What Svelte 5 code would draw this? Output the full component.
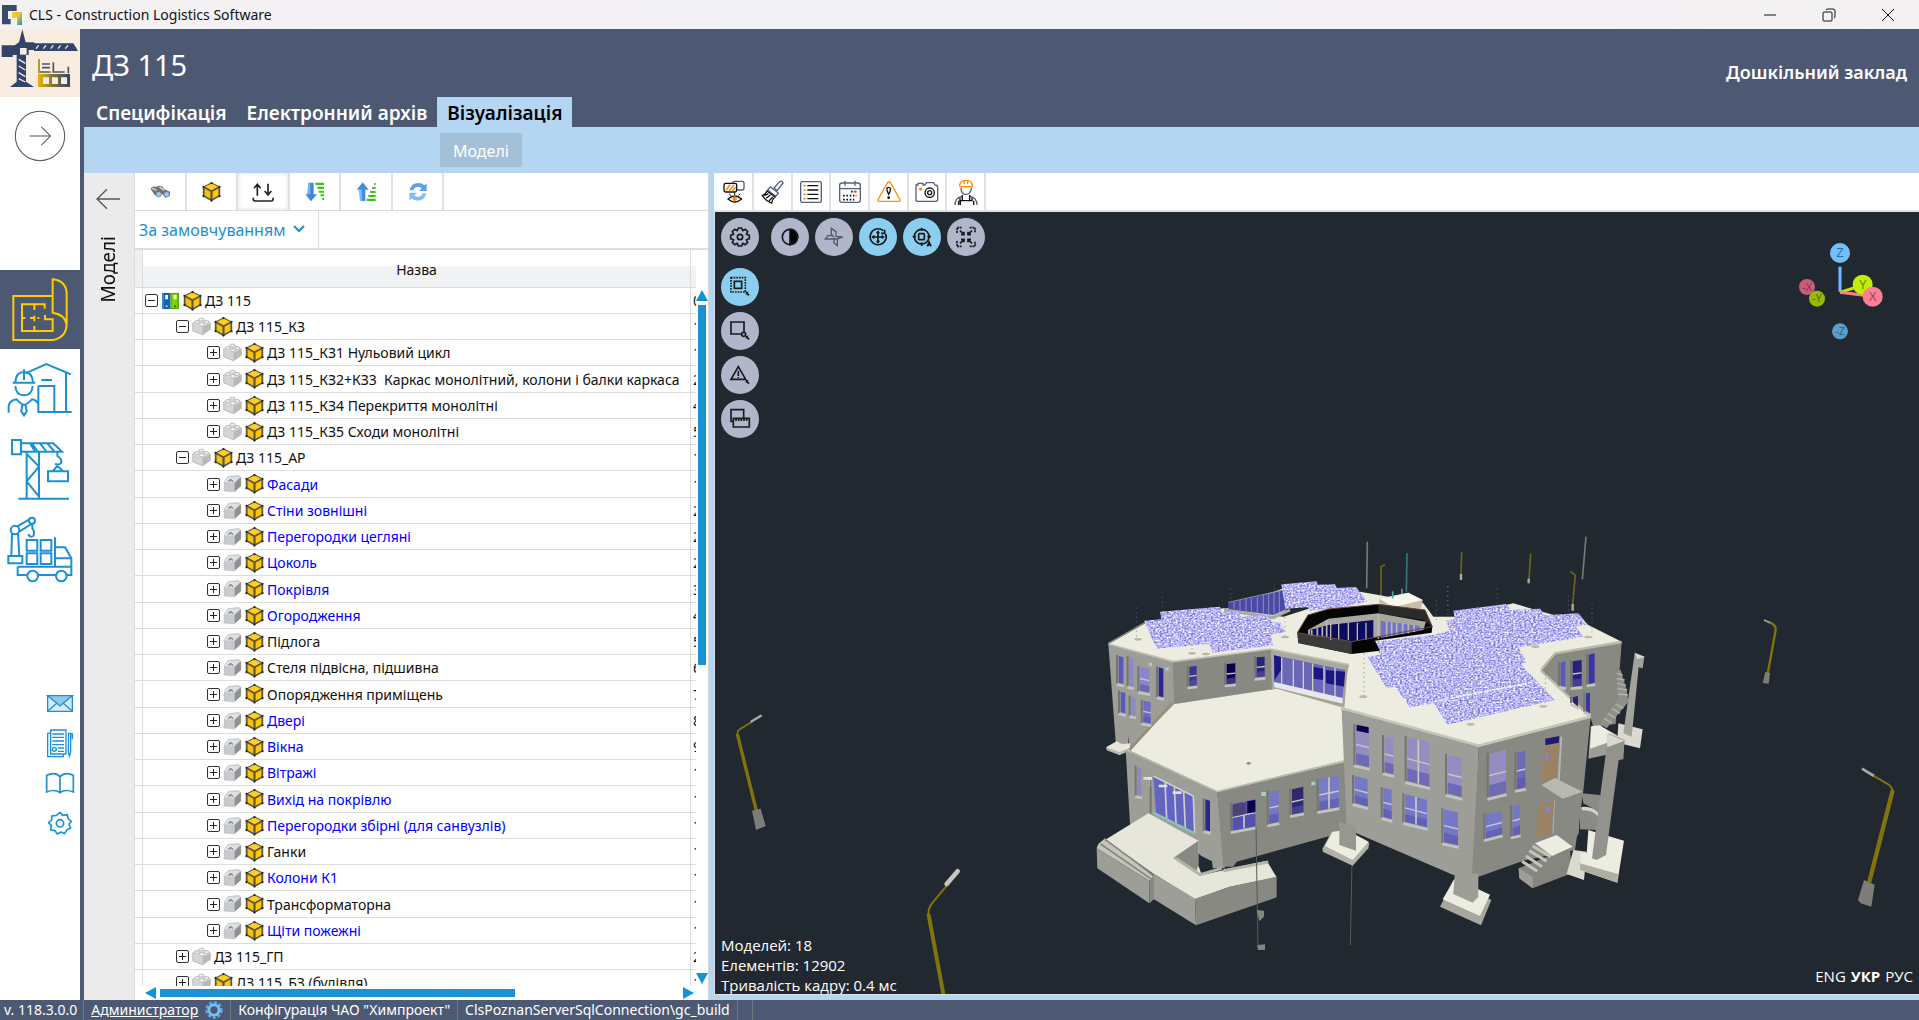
<script>
  const tabs = ['Специфікація', 'Електронний архів', 'Візуалізація'];
  let activeTab = $state(2);

  const rows = [
    { level: 0, name: 'ДЗ 115', kind: 'binder', num: '0', open: true },
    { level: 1, name: 'ДЗ 115_КЗ', kind: 'brick', num: '1', open: true },
    { level: 2, name: 'ДЗ 115_КЗ1 Нульовий цикл', kind: 'brick', num: '1' },
    { level: 2, name: 'ДЗ 115_КЗ2+КЗ3  Каркас монолітний, колони і балки каркаса', kind: 'brick', num: '2' },
    { level: 2, name: 'ДЗ 115_КЗ4 Перекриття монолітні', kind: 'brick', num: '4' },
    { level: 2, name: 'ДЗ 115_КЗ5 Сходи монолітні', kind: 'brick', num: '5' },
    { level: 1, name: 'ДЗ 115_АР', kind: 'brick', num: '1', open: true },
    { level: 2, name: 'Фасади', kind: 'part', num: '1', link: true },
    { level: 2, name: 'Стіни зовнішні', kind: 'part', num: '2', link: true },
    { level: 2, name: 'Перегородки цегляні', kind: 'part', num: '2', link: true },
    { level: 2, name: 'Цоколь', kind: 'part', num: '2', link: true },
    { level: 2, name: 'Покрівля', kind: 'part', num: '3', link: true },
    { level: 2, name: 'Огородження', kind: 'part', num: '4', link: true },
    { level: 2, name: 'Підлога', kind: 'part', num: '5' },
    { level: 2, name: 'Стеля підвісна, підшивна', kind: 'part', num: '6' },
    { level: 2, name: 'Опорядження приміщень', kind: 'part', num: '7' },
    { level: 2, name: 'Двері', kind: 'part', num: '8', link: true },
    { level: 2, name: 'Вікна', kind: 'part', num: '9', link: true },
    { level: 2, name: 'Вітражі', kind: 'part', num: '1', link: true },
    { level: 2, name: 'Вихід на покрівлю', kind: 'part', num: '1', link: true },
    { level: 2, name: 'Перегородки збірні (для санвузлів)', kind: 'part', num: '1', link: true },
    { level: 2, name: 'Ганки', kind: 'part', num: '1' },
    { level: 2, name: 'Колони К1', kind: 'part', num: '1', link: true },
    { level: 2, name: 'Трансформаторна', kind: 'part', num: '1' },
    { level: 2, name: 'Щіти пожежні', kind: 'part', num: '1', link: true },
    { level: 1, name: 'ДЗ 115_ГП', kind: 'brick', num: '2', noCube: true },
    { level: 1, name: 'ДЗ 115_БЗ (будівля)', kind: 'brick', num: '1' }
  ];

  // windows of the model: left x, right x, top left, top right, bottom left, bottom right, fill
  const windows = [
    [116, 130, 408, 412, 488, 492, '#5a58b8'],
    [148, 160, 412, 416, 496, 500, '#8d89c4'],
    [180, 208, 440, 446, 512, 518, '#8c86c6'],
    [236, 250, 442, 446, 528, 532, '#2a2590'],
    [122, 136, 515, 519, 576, 580, '#5a58b8'],
    [154, 166, 530, 534, 584, 588, '#8d89c4'],
    [190, 212, 542, 546, 606, 611, '#6d6cc6'],
    [328, 350, 440, 437, 498, 495, '#3a3590'],
    [440, 466, 432, 430, 492, 489, '#0a0050'],
    [530, 554, 412, 410, 472, 469, '#2a2478'],
    [458, 526, 852, 838, 932, 918, '#5550b0'],
    [568, 596, 816, 811, 912, 905, '#7577c8'],
    [636, 670, 808, 800, 884, 876, '#30286c'],
    [718, 776, 778, 766, 872, 860, '#7a7ac6'],
    [172, 184, 740, 744, 824, 828, '#8d89c4'],
    [376, 390, 838, 842, 930, 934, '#2a2590'],
    [828, 867, 614, 624, 732, 742, '#958dc0'],
    [914, 940, 648, 654, 756, 763, '#958dc0'],
    [982, 1048, 650, 666, 782, 800, '#958dc0'],
    [1103, 1145, 704, 713, 820, 832, '#958dc0'],
    [824, 863, 768, 778, 848, 860, '#7577c8'],
    [910, 935, 804, 809, 890, 898, '#7577c8'],
    [975, 1041, 822, 840, 905, 922, '#7577c8'],
    [1092, 1134, 868, 878, 966, 976, '#7577c8'],
    [1228, 1278, 702, 690, 832, 818, '#958dc0'],
    [1311, 1336, 698, 692, 808, 802, '#6e69b8'],
    [1218, 1266, 884, 873, 956, 942, '#7577c8'],
    [1298, 1320, 858, 852, 948, 942, '#7577c8'],
    [1442, 1456, 428, 424, 496, 500, '#5a58b8'],
    [1478, 1505, 424, 420, 500, 497, '#28207a'],
    [1526, 1544, 404, 400, 492, 488, '#3a36a0'],
    [1518, 1530, 520, 518, 572, 580, '#3a36a0'],
    [1478, 1494, 532, 528, 546, 560, '#28207a']
  ];

  const columns = [605, 640, 670, 698, 732, 765];
  const atrium = [752, 776, 805, 832, 858];
  const masts = [
    [170, 262, 358], [247, 230, 262], [452, 205, 240], [584, 190, 215], [610, 180, 215], [1104, 198, 285],
    [1069, 240, 300], [1102, 198, 270], [1252, 205, 256], [1465, 225, 280], [1536, 250, 340], [852, 400, 528],
    [1178, 465, 605], [1396, 460, 550], [336, 370, 400], [1366, 290, 376], [1296, 320, 400], [615, 290, 350]
  ];
  const caps = [[174, 358], [336, 400], [615, 351], [850, 530], [1172, 613], [1390, 559], [1366, 380], [1525, 351], [378, 402]];
</script>

{#snippet cube()}
  <svg class="ico" viewBox="1 1 52 55" aria-hidden="true">
    <path d="M27 2 51 14V40L27 54 3 40V14Z" fill="#5b5541" />
    <path d="M27 5 45 14 27 24 9 14Z" fill="#ffcf1a" />
    <path d="M8 19 24 28V47L8 38Z" fill="#f6c20c" />
    <path d="M46 19 30 28V47L46 38Z" fill="#ffc800" />
    <g fill="#222"><circle cx="27" cy="4" r="3" /><circle cx="5" cy="14" r="3" /><circle cx="49" cy="14" r="3" /><circle cx="5" cy="40" r="3" /><circle cx="49" cy="40" r="3" /><circle cx="27" cy="52" r="3" /></g>
  </svg>
{/snippet}

{#snippet brick()}
  <svg class="ico" viewBox="1 1 52 55" aria-hidden="true">
    <path d="M3 17 27 6 51 17V35L30 50 3 39Z" fill="#d5d5d5" stroke="#aaa" stroke-width="2" />
    <path d="M30 27 51 17V35L30 50Z" fill="#b9b9b9" />
    <path d="M3 17 27 6 51 17 30 27Z" fill="#ececec" />
    <g fill="#f2f2f2" stroke="#a5a5a5" stroke-width="2"><ellipse cx="27" cy="8" rx="7" ry="4" /><ellipse cx="14" cy="15" rx="7" ry="4" /><ellipse cx="40" cy="15" rx="7" ry="4" /><ellipse cx="28" cy="21" rx="7" ry="5" /></g>
  </svg>
{/snippet}

{#snippet part()}
  <svg class="ico" viewBox="1 1 52 55" aria-hidden="true">
    <path d="M4 24Q6 16 16 8L44 5 50 10V34L32 50 4 48Z" fill="#c9cacd" stroke="#9a9b9e" stroke-width="1" />
    <path d="M4 24Q6 16 18 9L48 8 32 25Z" fill="#dde0e4" />
    <path d="M33 26 50 10V34L33 50Z" fill="#8f9194" />
    <circle cx="22" cy="18" r="3" fill="#3f9a55" /><circle cx="27" cy="20" r="2" fill="#d04a3c" /><circle cx="17" cy="20" r="2" fill="#3e6fc2" />
  </svg>
{/snippet}

{#snippet binder()}
  <svg class="ico" viewBox="0 0 54 54" aria-hidden="true">
    <path d="M3 4H27V50H3Z" fill="#1266a8" /><path d="M27 4H51V50H27Z" fill="#4ba800" />
    <path d="M3 4H8V50H3Z" fill="#3d92cf" /><path d="M30 7H47V47H30Z" fill="#7fd000" />
    <path d="M12 10H20V22H12ZM36 10H44V22H36Z" fill="#fff" />
    <circle cx="16" cy="42" r="3" fill="#bcd" /><circle cx="40" cy="42" r="3" fill="#285f00" />
  </svg>
{/snippet}

{#snippet cursor(x, y)}
  <path d="M{x} {y}h9l-3 3 6 6-4 4-6-6-2 3Z" fill="#161b20" stroke="none" />
{/snippet}

<div class="app">
  <header class="titlebar">
    <svg width="20" height="20" viewBox="6 12 60 60" aria-hidden="true">
      <defs><linearGradient id="lg" x1="0" y1="0" x2="1" y2="1"><stop offset="0" stop-color="#f7cf1b" /><stop offset=".45" stop-color="#e8c43a" /><stop offset="1" stop-color="#1b8fd6" /></linearGradient></defs>
      <path d="M6 12H50V30H24V54H32V70H6Z" fill="#3b4a69" />
      <path d="M36 33H66V72H51V50H36Z" fill="url(#lg)" />
    </svg>
    <span>CLS - Construction Logistics Software</span>
    <div class="win">
      <button aria-label="Згорнути"><svg viewBox="0 0 14 14"><path d="M1 7H13" /></svg></button>
      <button aria-label="Відновити"><svg viewBox="0 0 14 14"><rect x="1" y="4" width="9" height="9" rx="1" /><path d="M4 2Q5 1 6 1H11Q13 1 13 3V8Q13 10 12 10" /></svg></button>
      <button aria-label="Закрити"><svg viewBox="0 0 14 14"><path d="M1 1 13 13M13 1 1 13" /></svg></button>
    </div>
  </header>

  <div class="main">
    <nav class="rail">
      <svg class="brand" viewBox="0 87 240 204" role="img" aria-label="CLS">
        <g fill="#33446a">
          <path d="M67 88 77 127H100L106 130H220L234 153H102V150H86V165H78V245L102 261H30L50 245V165H38V171H5V136H44L57 127Z" />
        </g>
        <path d="M60 144H80V164H60Z" fill="#f8ece0" />
        <g stroke="#f8ece0" stroke-width="5" fill="none">
          <path d="M56 178 76 190M56 198 76 210M56 218 76 230M56 236 76 246" stroke-width="4" />
          <path d="M108 146 116 136M130 146 138 136M152 146 160 136M174 146 182 136M196 146 204 136" stroke-width="4" />
        </g>
        <defs><linearGradient id="bg1"><stop offset="0" stop-color="#e8b400" /><stop offset=".5" stop-color="#7a7238" /><stop offset="1" stop-color="#33446a" /></linearGradient></defs>
        <path d="M114 222H210V261H114ZM129 232V252H147V232ZM156 232V252H174V232ZM183 232V252H201V232Z" fill="url(#bg1)" fill-rule="evenodd" />
        <path d="M117 177V220" stroke="#b09a2c" stroke-width="6" />
        <path d="M126 192H150M126 203H150M120 216H152M160 187V216H194M205 200V220" stroke="#4d5558" stroke-width="5" fill="none" />
      </svg>
      <div class="expand">
        <button aria-label="Розгорнути меню"><svg viewBox="0 0 144 144"><circle cx="72" cy="72" r="71" /><path d="M42 72H100M76 46 102 72 76 98" /></svg></button>
      </div>

      <button class="big active" aria-label="Проєкт">
        <svg viewBox="0 60 240 237"><path d="M158 138H40V270H160Q200 262 200 220V130Q198 92 158 88V188Q196 194 200 225M134 176V163H66V243H158V208H135V195M66 204H76M90 204H103V197M103 163V180M103 204V214M103 228V243M112 204H118" /></svg>
      </button>
      <button class="big" aria-label="Склад">
        <svg viewBox="0 297 240 240"><path d="M76 370 139 342 213 373M198 368V486M115 408H163V486M115 408V486H215M124 390H156M38 398H106M46 396Q48 366 72 366T99 396M72 358V390M46 408Q48 436 72 436T98 408M26 488V468Q28 452 50 448 64 464 72 464T96 448Q110 450 116 464M67 462 64 484 72 496 80 484 76 462" /></svg>
      </button>
      <button class="big" aria-label="Будівництво">
        <svg viewBox="0 537 240 240"><path d="M36 570H63V613H36ZM63 580H160L186 605H63M80 605V746M117 605V746M55 746H207M80 612 117 650 80 694 117 740M90 580 104 603M112 603 96 580M120 580 138 603M142 580 162 603M172 605V618Q186 626 184 636T165 642M172 648 158 664H190L172 648M144 664H204V694H144Z" /></svg>
      </button>
      <button class="big" aria-label="Логістика">
        <svg viewBox="0 777 240 240"><circle cx="45" cy="840" r="13" /><circle cx="96" cy="812" r="9" /><path d="M52 829 88 808M58 845 94 822M36 850 34 918M54 850 58 918M25 918H67V940H25ZM97 822V835Q106 846 100 858 90 864 85 852M80 870H112V902H80ZM122 870H154V902H122ZM80 910H112V942H80ZM122 910H154V942H122ZM165 862V948M165 892H195L214 925V975H200M168 925H212M53 950H214M53 950V975H80M114 975H168" /><circle cx="98" cy="978" r="16" /><circle cx="184" cy="978" r="16" /></svg>
      </button>

      <div class="small-group">
        <button class="small" aria-label="Пошта"><svg viewBox="0 69 240 120"><path d="M143 107H217V154H143Z" fill="#d9edf9" /><path d="M143 107H217L180 138Z" fill="#8ccbea" /><path d="M143 154 170 130M217 154 190 130" /></svg></button>
        <button class="small" aria-label="Документи"><svg viewBox="0 189 240 120"><path d="M152 210H198V282H152ZM150 220H143V290H190V284M157 222H192M157 232H192M157 243H192M157 254H192M174 264H192M174 274H192M206 220H212V276L208 288 205 276ZM212 222H217V238" /><circle cx="163" cy="268" r="6" /></svg></button>
        <button class="small" aria-label="Довідка"><svg viewBox="0 309 240 120"><path d="M180 350V398Q164 386 140 396V346Q166 334 180 350Q196 334 220 346V396Q196 386 180 398" stroke-width="5" /></svg></button>
        <button class="small" aria-label="Налаштування"><svg viewBox="0 429 240 120"><circle cx="180" cy="490" r="11" stroke-width="5" /><path d="M180 457 188 466 202 464 204 475 214 484 207 493 212 504 201 509 194 521 183 516 172 522 165 512 152 510 154 497 146 488 155 480 155 468 169 466Z" stroke-width="5" stroke-linejoin="round" /></svg></button>
      </div>
    </nav>

    <div class="content">
      <div class="head">
        <h1>ДЗ 115</h1>
        <strong>Дошкільний заклад</strong>
        <div class="tabs" role="tablist">
          {#each tabs as tab, i}
            <button role="tab" aria-selected={i === activeTab} class:current={i === activeTab} onclick={() => (activeTab = i)}>{tab}</button>
          {/each}
        </div>
      </div>
      <div class="subbar"><button>Моделі</button></div>

      <div class="work">
        <aside class="sidetab">
          <button aria-label="Сховати панель"><svg viewBox="0 0 78 66"><path d="M75 33H6M36 4 6 33 36 62" /></svg></button>
          <span>Моделі</span>
        </aside>

        <section class="tree">
          <div class="toolbar six">
            <button aria-label="Пошук"><svg viewBox="54 61 72 72"><path d="M62 88Q66 78 78 82L86 78Q98 78 102 88L120 96V108L106 114 96 102 86 112 74 106Z" fill="#6c6f73" /><path d="M66 86 80 92M88 82 102 92" stroke="#c9ccd0" stroke-width="5" /><circle cx="86" cy="104" r="8" fill="#9cc6ee" stroke="#74797f" stroke-width="2" /><circle cx="110" cy="104" r="8" fill="#9cc6ee" stroke="#74797f" stroke-width="2" /></svg></button>
            <button aria-label="Модель">{@render cube()}</button>
            <button aria-label="Обмін" class="raised"><svg viewBox="362 61 72 72"><path d="M381 108V76M371 86 381 74 391 86M413 72V104M403 94 413 106 423 94M369 114V119Q369 124 374 124H423Q428 124 428 119V114" fill="none" stroke="#222" stroke-width="5" /></svg></button>
            <button aria-label="Розгорнути все"><svg viewBox="518 61 72 72"><path d="M534 69H550V104H560L542 125 525 104H534Z" fill="#3f86dc" /><path d="M534 69H540V104H530" fill="#7db4f0" /><path d="M554 69H581V76H556ZM560 81H581V88H562ZM564 93H581V99H566ZM570 104H581V110H571ZM575 115H581V121H576Z" fill="#3cc11e" /></svg></button>
            <button aria-label="Згорнути все"><svg viewBox="670 61 72 72"><path d="M688 124H704V90H714L696 68 678 90H688Z" fill="#3f8fe0" /><path d="M688 124H694V90H684" fill="#7dbcf2" /><path d="M708 117H735V124H708ZM712 106H735V112H714ZM718 94H735V100H719ZM724 82H735V88H725ZM730 70H735V77H731Z" fill="#3cc11e" /></svg></button>
            <button aria-label="Оновити"><svg viewBox="827 61 72 72"><path d="M838 92Q842 70 864 70 876 70 882 77L889 71V94H866L874 86Q868 80 860 82 850 84 850 92Z" fill="#5aa2ec" /><path d="M888 101Q884 123 862 123 850 123 844 116L837 122V99H860L852 107Q858 113 866 111 876 109 876 101Z" fill="#86bdf3" /></svg></button>
          </div>
          <div class="filter">
            <label>
              <select aria-label="Подання"><option>За замовчуванням</option></select>
              <svg viewBox="0 0 12 8" aria-hidden="true"><path d="M1 1 6 6 11 1" /></svg>
            </label>
          </div>

          <div class="grid-wrap">
            <div class="grid">
              <table>
                <thead>
                  <tr><th class="mark"></th><th class="name">Назва</th><th></th></tr>
                </thead>
                <tbody>
                  {#each rows as row}
                    <tr>
                      <td class="mark"></td>
                      <td class="name">
                        <div class="node level-{row.level}">
                          <button class="toggle" class:open={row.open} aria-label={row.open ? 'Згорнути' : 'Розгорнути'}></button>
                          {#if row.kind === 'binder'}
                            {@render binder()}
                          {:else if row.kind === 'brick'}
                            {@render brick()}
                          {:else}
                            {@render part()}
                          {/if}
                          {#if !row.noCube}
                            {@render cube()}
                          {/if}
                          <span class:link={row.link}>{row.name}</span>
                        </div>
                      </td>
                      <td class="num">{row.num}</td>
                    </tr>
                  {/each}
                </tbody>
              </table>
            </div>
            <div class="vscroll"><i class="up"></i><b></b><i class="down"></i></div>
            <div class="hscroll"><i class="left"></i><b></b><i class="right"></i></div>
          </div>
        </section>

        <section class="viewer">
          <div class="toolbar seven">
            <button aria-label="Видимість"><svg viewBox="60 39 84 84"><rect x="98" y="49" width="34" height="26" rx="6" fill="#fff" stroke="#56607d" stroke-width="4" /><rect x="72" y="55" width="38" height="26" rx="5" fill="#fff" stroke="#111" stroke-width="4" /><path d="M78 76 90 59M88 78 102 59M98 78 107 66" stroke="#ff8c0a" stroke-width="5" /><path d="M84 102Q104 84 125 102 104 120 84 102Z" fill="#fff" stroke="#111" stroke-width="4" /><circle cx="104" cy="101" r="7" fill="#ff8c0a" /><path d="M104 82V90M88 86 92 92M120 86 116 92" stroke="#111" stroke-width="3" /></svg></button>
            <button aria-label="Очистити"><svg viewBox="174 39 84 84"><path d="M236 50Q244 46 246 54L228 77 219 69Z" fill="none" stroke="#56607d" stroke-width="4" /><path d="M208 66 232 84 224 94 200 75Z" fill="none" stroke="#56607d" stroke-width="4" /><path d="M198 78 222 96Q214 102 212 114 196 110 184 92 194 88 198 78ZM190 92 202 86M196 100 208 90M204 108 215 96" fill="none" stroke="#111" stroke-width="4" /></svg></button>
            <button aria-label="Список"><svg viewBox="291 39 84 84"><rect x="302" y="50" width="62" height="62" rx="5" fill="none" stroke="#56607d" stroke-width="4" /><path d="M322 62H355M322 75H355M322 88H355M322 101H355" stroke="#111" stroke-width="4" /><path d="M310 62H317M310 75H317M310 88H317M310 101H317" stroke="#ff8c0a" stroke-width="5" /></svg></button>
            <button aria-label="Календар"><svg viewBox="408 39 84 84"><rect x="419" y="54" width="62" height="58" rx="7" fill="none" stroke="#56607d" stroke-width="4" /><path d="M419 71H481M435 47V62M465 47V62" stroke="#56607d" stroke-width="4" fill="none" /><path d="M453 80H471M429 92H463M429 104H463" stroke="#111" stroke-width="5" stroke-dasharray="5 5" /><path d="M466 80H471M466 92H471" stroke="#ff8c0a" stroke-width="5" /></svg></button>
            <button aria-label="Колізії"><svg viewBox="525 39 84 84"><path d="M562 54Q567 48 572 54L600 104Q602 109 596 109H538Q532 109 534 104Z" fill="none" stroke="#ff8c0a" stroke-width="4" /><path d="M566 88Q555 66 566 67T566 88Z" fill="none" stroke="#111" stroke-width="4" /><circle cx="566" cy="98" r="4" fill="#111" /></svg></button>
            <button aria-label="Знімок"><svg viewBox="641 39 84 84"><path d="M650 60V104Q650 109 656 109H709Q715 109 715 103V68Q715 60 707 60L703 53H681L677 60H671V55H656V60Z" fill="none" stroke="#56607d" stroke-width="4" /><circle cx="691" cy="83" r="14" fill="none" stroke="#111" stroke-width="4" /><circle cx="691" cy="83" r="6" fill="none" stroke="#111" stroke-width="4" /><circle cx="664" cy="72" r="5" fill="#ff8c0a" /></svg></button>
            <button aria-label="Виконавці"><svg viewBox="757 39 84 84"><path d="M780 64Q780 46 799 46T818 64M779 65H820M794 46V58M804 46V58" fill="none" stroke="#ff8c0a" stroke-width="4" /><path d="M784 68Q784 88 799 88T815 68M766 120Q766 98 788 94M832 120Q832 98 810 94" fill="none" stroke="#56607d" stroke-width="4" /><path d="M781 98V107H817V98M777 107V120M822 107V120M782 107V120M788 90V106M810 90V106" fill="none" stroke="#111" stroke-width="4" /></svg></button>
          </div>

          <div class="canvas">
            <svg class="scene" viewBox="-1095 -924 3612 2346" preserveAspectRatio="xMidYMid slice" role="img" aria-label="Модель будівлі">
              <defs>
                <filter id="solar" x="0" y="0" width="100%" height="100%" color-interpolation-filters="sRGB">
                  <feTurbulence type="fractalNoise" baseFrequency="0.15 0.2" numOctaves="2" seed="4" />
                  <feColorMatrix values="1 0 0 0 .22  1 0 0 0 .21  .3 0 0 0 .8  0 0 0 0 1" />
                  <feComposite in2="SourceGraphic" operator="in" />
                </filter>
              </defs>

              <!-- masts and lamps behind the house -->
              <g fill="none" stroke-width="5">
                <path d="M862 65 860 205M1518 50 1507 178" stroke="#777975" />
                <path d="M981 100 979 215" stroke="#39767b" />
                <path d="M903 230V140L915 134M1145 95 1143 165M1352 100 1347 180M1486 165 1478 255M1486 165 1470 154" stroke="#6e6418" />
                <path d="M1143 162V180M1346 176V190M1478 252V272" stroke="#aaa" stroke-width="7" />
              </g>

              <!-- left wing -->
              <path d="M85 372 280 425 285 552 150 690 145 648 145 680 108 678Z" fill="#9d9e97" />
              <path d="M78 682 110 664 125 672 150 670 150 690 118 705Z" fill="#e6e6da" />
              <path d="M78 682 118 696 150 684 150 692 118 705 80 691Z" fill="#b8b8ad" />
              <path d="M278 425 572 385 580 508 283 553Z" fill="#888982" />
              <path d="M572 385 806 434 796 568 576 508Z" fill="#a9a99f" />

              <!-- roof -->
              <path d="M85 372 195 310 430 265 610 290 700 262 840 215 900 226 1030 250 1060 290 1130 290 1300 250 1525 315 1625 365 1425 400 1383 450 1530 588 1195 675 785 565 806 434 572 387 280 425Z" fill="#ecece0" />
              <path d="M85 372 280 425 572 387 806 434" fill="none" stroke="#bfbfb5" stroke-width="5" />
              <path d="M85 370 195 308" stroke="#8e8878" stroke-width="4" />

              <!-- clerestory glass -->
              <path d="M432 268 610 205 618 270 580 292Z" fill="#cfcfc6" />
              <path d="M445 248 615 210 618 268 580 285 445 268Z" fill="#4a49a8" />
              <path d="M445 247 615 209M462 245V268M480 240V272M498 237V275M514 233V278M532 229V280M550 225V282M566 222V284M582 218V284M598 215V276" stroke="#8f8fb4" stroke-width="3" />
              <path d="M432 270 580 293 630 270" fill="none" stroke="#aaaaa0" stroke-width="9" />

              <!-- solar arrays -->
              <g filter="url(#solar)">
                <path d="M192 302 244 298 240 275 420 260 425 277 475 274 482 290 565 286 578 308 600 306 614 336 572 344 580 376 398 398 388 372 230 386Z" />
                <path d="M604 193 710 184 714 194 765 193 771 204 828 201 862 244 790 262 690 272 684 262 616 266Z" />
                <path d="M885 365 1060 345 1108 332 1098 302 1125 298 1120 272 1278 252 1294 270 1380 266 1395 286 1495 280 1524 314 1486 318 1510 350 1316 382 1340 428 1322 432 1424 540 1102 614 1062 550 990 562 945 500 920 505 862 410 900 405Z" />
              </g>
              <path d="M1060 545 1360 486M1130 530 1330 492" stroke="#f3f3fb" stroke-width="4" stroke-dasharray="12 5" />

              <!-- roof house -->
              <path d="M898 236 985 218 1028 240 1024 266 940 262 898 250Z" fill="#c9bea5" />
              <path d="M898 236 985 218 1028 240 940 262Z" fill="#f7f7ee" />
              <path d="M938 214V235M966 206V222" stroke="#4aa6a0" stroke-width="5" />

              <!-- atrium -->
              <path d="M652 338 684 285 745 267 895 253 1035 270 1057 320 1055 338 885 362 900 392 815 402 655 368Z" fill="#050505" />
              <path d="M895 253 1035 270 1057 320 1030 300 895 280Z" fill="#2b2b2a" />
              <path d="M652 338 815 365 815 402 655 370Z" fill="#3a3a39" />
              <path d="M684 330 745 296 895 280 1038 305 1030 330 815 362 684 345Z" fill="#a8a8a0" />
              <path d="M690 330 745 315 880 300 880 355 815 364 690 343Z" fill="#0c0a5c" />
              <path d="M902 302 1020 318 1020 332 902 354Z" fill="#7572c6" />
              <path d="M895 282V356M740 300V350M695 330V345M712 325V347M727 320V349M920 304V350M935 306V348M950 308V345M968 310V342M985 312V340M1002 315V336" stroke="#b9b9b2" stroke-width="5" />
              {#each atrium as x}
                <path d="M{x} 308V360" stroke="#b9b9b2" stroke-width="4" />
              {/each}
              <path d="M652 338 684 285 745 267 895 253 1035 270 1057 320 815 365Z" fill="none" stroke="#6a4a44" stroke-width="3" />

              <!-- gallery glazing -->
              <path d="M582 406 795 450 788 534 582 486Z" fill="#6b67b8" />
              <path d="M582 406 605 412V448L584 480ZM700 440 730 446V480L700 476ZM738 450 795 455V500L738 490Z" fill="#1c1780" />
              {#each columns as x}
                <path d="M{x} {412 + (x - 605) / 5}V{506 + (x - 605) / 4}" stroke="#cfcfc6" stroke-width="4" />
              {/each}
              <path d="M582 486 788 534V552L582 504Z" fill="#e8e8ec" />
              <path d="M580 504 792 556M800 436 790 565" stroke="#a99f8d" stroke-width="6" fill="none" />

              <!-- terrace block -->
              <path d="M137 690 412 815 435 1045 400 1045 355 1000 150 912Z" fill="#9d9e97" />
              <path d="M412 815 797 722 806 932 470 1025 460 1040 430 1040Z" fill="#888982" />
              <path d="M283 552 590 506 785 562 797 725 412 815 145 690Z" fill="#ecece0" />
              <path d="M278 548 148 690" stroke="#9a8c77" stroke-width="8" />
              <path d="M140 690 412 815 797 722" stroke="#b9b9af" stroke-width="5" fill="none" />
              <ellipse cx="506" cy="730" rx="6" ry="4" fill="#8b8b83" />

              <!-- back right wing -->
              <path d="M1383 450 1425 400 1625 367 1607 612 1540 620 1530 588Z" fill="#888982" />
              <path d="M1383 450 1425 400 1625 366M1383 452 1530 590" fill="none" stroke="#bdb9ab" stroke-width="7" />

              <!-- main block -->
              <path d="M785 562 1197 675 1180 1078 1120 1065 830 940 800 932Z" fill="#9d9e97" />
              <path d="M1197 678 1532 590 1510 812 1485 990 1330 1022 1175 1078Z" fill="#888982" />
              <path d="M785 565 1197 677 1532 590" stroke="#c6c6bb" stroke-width="8" fill="none" />

              <!-- windows -->
              {#each windows as [x1, x2, tl, tr, bl, br, fill]}
                <path d="M{x1 - 5} {tl - 3}V{bl + 3}" stroke="#74756f" stroke-width="6" />
                <path d="M{x1} {tl}L{x2} {tr}V{br}L{x1} {bl}Z" {fill} />
                {#if x2 - x1 > 20}
                  <path d="M{x1} {tl + (bl - tl) * 0.72}L{x2} {tr + (br - tr) * 0.72}V{br}L{x1} {bl}Z" fill="#5553ae" opacity=".6" />
                  <path d="M{x1} {(tl + bl) / 2}L{x2} {(tr + br) / 2}" stroke="#c9c9c4" stroke-width="4" />
                {/if}
                {#if x2 - x1 > 55}
                  <path d="M{(x1 + x2) / 2} {(tl + tr) / 2}V{(bl + br) / 2}" stroke="#c9c9c4" stroke-width="5" />
                {/if}
                <path d="M{x1 - 6} {bl + 6}L{x2 + 2} {br + 6}" stroke="#c4c4ba" stroke-width="8" />
              {/each}
              <path d="M458 854 496 846V882L458 890Z" fill="#4d4278" /><path d="M502 844 526 840V876L502 880ZM830 614 866 622V640L830 632Z" fill="#0a0050" />

              <!-- entrance glazing -->
              <path d="M220 768 340 828 344 940 228 880Z" fill="#6464c4" />
              <path d="M220 768 340 828M255 785 260 897M283 800 288 910M311 814 316 926M340 828 344 940" stroke="#cfcfc6" stroke-width="5" fill="none" />
              <path d="M220 878 344 940" stroke="#8ac0b6" stroke-width="7" />
              <path d="M190 775H212V800M236 798H262M278 818H305" stroke="#e2e2d8" stroke-width="8" fill="none" />
              <path d="M212 780V880" stroke="#74756f" stroke-width="6" />
              <path d="M544 816H558V828H544ZM694 785H706V796H694ZM206 428H216V438H206ZM256 442H266V452H256Z" fill="#9fd0c8" />

              <!-- porch -->
              <path d="M205 880 355 962 355 1035 365 1065 560 1022 590 1072 450 1100 345 1138 222 1062 75 960Z" fill="#e6e6da" />
              <path d="M75 955 222 1070 222 1085 208 1082 50 985 55 972Z" fill="#c5c5bc" />
              <path d="M50 985 208 1082 208 1150 52 1045Z" fill="#9d9e97" />
              <path d="M62 972 215 1078M75 958 222 1066" stroke="#85867f" stroke-width="5" />
              <path d="M208 1082 222 1066V1138L208 1150Z" fill="#888982" />
              <path d="M222 1062 345 1136 348 1216 222 1138Z" fill="#9d9e97" />
              <path d="M345 1136 450 1100 590 1070V1132L348 1216Z" fill="#888982" />
              <path d="M285 1010 355 962V1035L350 1052Z" fill="#888982" />
              <path d="M282 1012 360 1064 425 1045M430 1052 565 1026" stroke="#b4b4ab" stroke-width="9" fill="none" />
              <path d="M358 1005 396 1024 398 1042 368 1054 356 1040Z" fill="#212830" />
              <path d="M528 920 534 1290M816 1030 811 1275" stroke="#575a58" stroke-width="3" />
              <path d="M530 1170 552 1172V1190L538 1204ZM532 1275 555 1273V1290H535Z" fill="#83857f" />

              <!-- footings -->
              <path d="M728 985 755 935 868 968 865 985 818 1037 728 995Z" fill="#b1b1a7" />
              <path d="M735 978 758 935 800 930 866 965 818 1020Z" fill="#ecece0" />
              <path d="M778 905 828 920V992L778 975Z" fill="#96978f" />
              <path d="M1080 1160 1120 1080 1234 1140 1203 1216Z" fill="#a7a79e" />
              <path d="M1088 1138 1125 1075 1230 1124 1200 1188Z" fill="#ecece0" />
              <path d="M1125 1055 1195 1062V1130L1178 1148 1120 1122Z" fill="#9d9e97" />

              <!-- doors and side porch -->
              <path d="M1394 684 1438 670 1430 775 1384 788ZM1376 856 1420 842 1415 940 1368 956Z" fill="#9a8262" />
              <path d="M1396 656 1438 648 1436 668 1396 676Z" fill="#201b70" />
              <path d="M1396 700 1407 698V720L1396 722ZM1398 860 1408 858V878L1398 880Z" fill="#8984c0" />
              <path d="M1444 650 1436 780M1426 840 1420 940" stroke="#b5b5ac" stroke-width="6" />
              <path d="M1425 835 1505 818 1496 940 1470 985 1420 945Z" fill="#888982" />
              <path d="M1384 795 1425 774 1508 815 1448 836Z" fill="#b9b9b2" />
              <path d="M1470 985 1425 1000 1316 1045 1318 1075 1358 1105 1475 1060Z" fill="#85867f" />
              <path d="M1316 1045 1358 1070V1105L1318 1075Z" fill="#9d9e97" />
              <path d="M1365 970 1430 945 1478 980 1416 1008Z" fill="#ecece0" />
              <path d="M1358 978 1412 1010M1348 992 1400 1024M1338 1008 1386 1040M1326 1024 1372 1054" stroke="#c4c4bb" stroke-width="9" />

              <!-- outer stairs and columns -->
              <path d="M1610 452 1622 450 1640 510 1645 545 1580 625 1560 612 1612 540Z" fill="#8f908a" />
              <path d="M1610 460 1628 465M1610 476 1634 480M1612 490 1638 496M1612 506 1642 510M1614 522 1644 525M1606 552 1630 565M1596 566 1620 580M1584 580 1606 594M1572 596 1596 608" stroke="#b4b4ac" stroke-width="4" />
              <path d="M1532 620 1560 618 1630 655 1600 700 1525 716Z" fill="#9d9e97" />
              <path d="M1534 618 1560 616 1620 655 1530 686Z" fill="#ecece0" />
              <path d="M1615 610 1688 628 1680 685 1612 668Z" fill="#dadad0" />
              <path d="M1664 400 1693 410 1688 445 1676 442 1655 650 1630 640Z" fill="#a2a39c" />
              <path d="M1664 398 1694 410 1672 418Z" fill="#d8d8ce" />
              <path d="M1505 820 1560 825 1565 880 1510 850ZM1500 860 1560 885 1555 930 1500 928Z" fill="#8a8b84" />
              <path d="M1505 866Q1535 862 1558 886" stroke="#d4d4ca" stroke-width="10" fill="none" />
              <path d="M1480 990 1520 995 1512 1080 1460 1062Z" fill="#dadad0" />
              <path d="M1525 930 1632 962 1612 1088 1500 1050 1502 998 1520 1000Z" fill="#ecece0" />
              <path d="M1500 1030 1614 1062 1612 1088 1500 1050Z" fill="#aeaea4" />
              <path d="M1585 640 1634 660 1630 718 1616 720 1578 1005 1550 1020 1536 1015 1580 680Z" fill="#92938c" />
              <path d="M1580 640 1634 662 1582 682Z" fill="#d8d8ce" />

              {#each masts as [x, y1, y2]}
                <path d="M{x} {y1}V{y2}" stroke="#6d6f78" stroke-width="2" stroke-dasharray="4 10" />
              {/each}
              {#each caps as [x, y]}
                <ellipse cx={x} cy={y} rx="12" ry="4" fill="#bdb8a6" />
              {/each}

              <!-- street lamps -->
              <g fill="none" stroke="#80740c" stroke-linejoin="round" stroke-linecap="round">
                <path d="M-985 606-1018 626Q-1030 632-1027 646" stroke-width="5" />
                <path d="M-1027 646-972 868" stroke-width="10" />
                <path d="M-402 1100-440 1145Q-457 1165-454 1185" stroke-width="6" />
                <path d="M-454 1185-410 1422" stroke-width="12" />
                <path d="M2070 308Q2088 314 2087 330L2064 456" stroke-width="7" />
                <path d="M2385 770 2420 790Q2438 800 2437 815" stroke-width="6" />
                <path d="M2437 815 2368 1085" stroke-width="13" />
              </g>
              <g stroke="#aaaba5" fill="none">
                <path d="M-988 606-955 586" stroke-width="7" /><path d="M-400 1092-367 1054" stroke-width="14" stroke="#c6c6bf" stroke-linecap="round" />
                <path d="M2052 300 2070 308" stroke-width="5" /><path d="M2346 746 2382 768" stroke-width="8" />
              </g>
              <g fill="#7d7e77">
                <path d="M-984 872-958 866-943 918-972 930Z" /><path d="M2056 456 2070 458 2066 491 2048 489Z" /><path d="M2352 1080 2384 1094 2374 1160 2342 1150 2334 1140Z" />
              </g>

              <!-- axes -->
              <g stroke-width="9" fill="none">
                <path d="M2280-760V-685" stroke="#70bfff" /><path d="M2280-683 2340-702" stroke="#bdea00" /><path d="M2280-683 2370-672" stroke="#ff7d97" />
              </g>
              <g font-size="38" text-anchor="middle">
                <circle cx="2181" cy="-699" r="24" fill="#ca5c78" /><text x="2181" y="-688" fill="#743a4b" font-size="32">-X</text>
                <circle cx="2211" cy="-664" r="24" fill="#97bb00" /><text x="2211" y="-653" fill="#4e6200" font-size="32">-Y</text>
                <circle cx="2280" cy="-566" r="24" fill="#5a9dcf" /><text x="2280" y="-555" fill="#335d7c" font-size="32">-Z</text>
                <circle cx="2280" cy="-801" r="30" fill="#70bfff" /><text x="2280" y="-788" fill="#3b668a">Z</text>
                <circle cx="2348" cy="-706" r="30" fill="#c3ee00" /><text x="2348" y="-693" fill="#677d08">Y</text>
                <circle cx="2378" cy="-670" r="30" fill="#ff7d97" /><text x="2378" y="-657" fill="#8c4754">X</text>
              </g>
            </svg>

            <div class="round-row">
              <button class="first" aria-label="Параметри"><svg viewBox="63 159 114 114"><circle cx="120" cy="216" r="8" /><path d="M115 189H125L128 197 136 193 143 200 139 208 148 211V221L139 224 143 232 136 239 128 235 125 243H115L112 235 104 239 97 232 101 224 92 221V211L101 208 97 200 104 193 112 197Z" stroke-linejoin="round" /></svg></button>
              <button aria-label="Контраст"><svg viewBox="213 159 114 114"><circle cx="270" cy="216" r="23" /><path d="M270 193A23 23 0 0 1 270 239Z" fill="#000" /></svg></button>
              <button aria-label="Площини"><svg viewBox="345 159 114 114"><path d="M402 216 394 208V190L408 200V214L428 216 410 222H376L384 212H400M402 218V234L412 242V222" stroke="#555a66" stroke-width="4" /></svg></button>
              <button class="on" aria-label="Обертання"><svg viewBox="475 159 114 114"><path d="M548 197A24 24 0 1 0 555 207M552 194V205H541M532 201V231M517 216H547M528 205 532 200 536 205M528 227 532 232 536 227M521 212 516 216 521 220M543 212 548 216 543 220" /></svg></button>
              <button class="on" aria-label="Центр"><svg viewBox="607 159 114 114"><circle cx="663" cy="215" r="22" /><rect x="654" y="206" width="17" height="18" rx="2" /><path d="M663 188V198M663 232V243M636 215H646M680 215H691M680 244 685 231 691 244M682 240H689" /></svg></button>
              <button aria-label="На весь екран"><svg viewBox="738 159 114 114"><path d="M768 204V188H784M806 188H822V204M768 228V244H784M806 244H822V228" stroke-dasharray="6 2" stroke-width="5" /><path d="M777 197 789 209M813 197 801 209M777 235 789 223M813 235 801 223M780 209H789V200M801 200V209H810M780 223H789V232M801 232V223H810" stroke-width="5" /></svg></button>
            </div>
            <div class="round-col">
              <button class="on" aria-label="Вибір"><svg viewBox="63 309 114 114"><rect x="93" y="338" width="43" height="43" stroke-dasharray="5 3" /><rect x="103" y="349" width="22" height="21" stroke-width="5" />{@render cursor(137, 380)}</svg></button>
              <button aria-label="Вибір рамкою"><svg viewBox="63 441 114 114"><path d="M126 507H93V471H132V502" /><circle cx="131" cy="508" r="6" />{@render cursor(137, 512)}</svg></button>
              <button aria-label="Попередження"><svg viewBox="63 572 114 114"><path d="M93 642 115 604 137 642ZM115 616V632M115 635V638" />{@render cursor(137, 644)}</svg></button>
              <button aria-label="Вимірювання"><svg viewBox="63 703 114 114"><path d="M98 767H93V732H131V757M100 758H148V784H100ZM108 758V766M116 758V766M124 758V766M132 758V766M140 758V766" /></svg></button>
            </div>

            <div class="stats">
              <div>Моделей: 18</div>
              <div>Елементів: 12902</div>
              <div>Тривалість кадру: 0.4 мс</div>
            </div>
            <div class="langs"><button>ENG</button><button class="cur">УКР</button><button>РУС</button></div>
          </div>
        </section>
      </div>
    </div>
  </div>

  <footer>
    <span class="ver">v. 118.3.0.0</span>
    <span class="user"><a href="#user">Администратор</a>
      <svg viewBox="0 0 32 32" aria-hidden="true"><circle cx="16" cy="16" r="12" fill="none" stroke="#5aa9e6" stroke-width="7" stroke-dasharray="5 3" /><circle cx="16" cy="16" r="9" fill="none" stroke="#7cc0f2" stroke-width="5" /></svg>
    </span>
    <span>Конфігурація ЧАО "Химпроект"</span>
    <span>ClsPoznanServerSqlConnection\gc_build</span>
    <span></span>
  </footer>
</div>

<style>
  :global(body) {
    margin: 0;
    overflow: hidden;
  }
  .app {
    height: 100vh;
    display: flex;
    flex-direction: column;
    font-family: 'Noto Sans', 'Open Sans', sans-serif;
    font-size: 14px;
    color: #111;
    background: #fff;
  }
  button {
    border: 0;
    padding: 0;
    margin: 0;
    background: none;
    font: inherit;
    color: inherit;
  }
  svg {
    display: block;
  }

  .titlebar {
    flex: 0 0 29px;
    display: flex;
    align-items: center;
    gap: 7px;
    padding: 0 2px;
    background: linear-gradient(90deg, #f5f1f3, #f2f2f7 50%, #f5f1f3);
  }
  .win {
    margin-left: auto;
    display: flex;
  }
  .win button {
    width: 59px;
    display: flex;
    justify-content: center;
  }
  .win svg {
    width: 14px;
    height: 14px;
    fill: none;
    stroke: #111;
    stroke-width: 1;
  }

  .main {
    flex: 1;
    min-height: 0;
    display: flex;
  }
  .rail {
    flex: 0 0 80px;
    border-right: 4px solid #4d5973;
    background: #fff;
  }
  .brand {
    width: 80px;
    height: 68px;
    background: #f8ece0;
  }
  .expand {
    height: 159px;
    padding-top: 14px;
    display: flex;
    justify-content: center;
  }
  .expand button {
    height: 48px;
  }
  .expand svg {
    width: 50px;
    height: 50px;
    fill: none;
    stroke: #555;
    stroke-width: 3;
    overflow: visible;
  }
  .big {
    display: block;
    width: 80px;
    height: 80px;
  }
  .big.active {
    height: 79px;
    background: #4d5973;
  }
  .big svg, .small svg {
    width: 100%;
    height: 100%;
    fill: none;
    stroke: #1b91d3;
    stroke-width: 6;
  }
  .big.active svg {
    stroke: #ffcc00;
  }
  .small-group {
    margin-top: 94px;
  }
  .small {
    display: block;
    width: 80px;
    height: 40px;
  }
  .small svg {
    stroke-width: 4;
  }

  .content {
    flex: 1;
    min-width: 0;
    display: flex;
    flex-direction: column;
  }
  .head {
    flex: 0 0 98px;
    display: grid;
    grid-template-columns: 1fr auto;
    grid-template-rows: 68px 30px;
    background: #4d5973;
    color: #fff;
  }
  h1 {
    margin: 0;
    padding: 17px 0 0 8px;
    font-size: 29px;
    line-height: 38px;
    font-weight: 400;
  }
  .head strong {
    padding: 30px 12px 0 0;
    font-size: 18px;
    line-height: 26px;
    font-weight: 600;
  }
  .tabs {
    grid-column: 1 / 3;
    display: flex;
    padding-left: 2px;
  }
  .tabs button {
    padding: 3px 10px 0;
    font-size: 19px;
    line-height: 27px;
    font-weight: 600;
  }
  .tabs .current {
    background: #b4d6f2;
    color: #000;
  }
  .subbar {
    flex: 0 0 46px;
    box-sizing: border-box;
    padding: 6px 0 0 356px;
    background: #b4d6f2;
  }
  .subbar button {
    padding: 2px 13px 0;
    font-size: 16px;
    line-height: 32px;
    color: #fff;
    background: #a4bfd8;
  }

  .work {
    flex: 1;
    min-height: 0;
    display: flex;
  }
  .sidetab {
    flex: 0 0 51px;
    display: flex;
    flex-direction: column;
    align-items: center;
    padding-right: 3px;
    background: #ebebeb;
    border-right: 1px solid #ddd;
    box-sizing: border-box;
  }
  .sidetab svg {
    width: 26px;
    height: 22px;
    margin: 15px 0 26px;
    fill: none;
    stroke: #555;
    stroke-width: 4;
  }
  .sidetab span {
    writing-mode: vertical-rl;
    transform: rotate(180deg);
    font-size: 19px;
    line-height: 24px;
  }

  .tree {
    flex: 0 0 573px;
    display: flex;
    flex-direction: column;
    border-right: 1px solid #d5d8dc;
    background: #fff;
  }
  .toolbar {
    flex: 0 0 37px;
    display: flex;
    border-bottom: 1px solid #ddd;
    background: #fff;
  }
  .toolbar button {
    flex: 0 0 52px;
    box-sizing: border-box;
    border-right: 2px solid #e2e2e4;
    display: flex;
    align-items: center;
    justify-content: center;
  }
  .six button:nth-child(even) {
    flex-basis: 51px;
  }
  .six svg {
    width: 24px;
    height: 24px;
  }
  .six .ico {
    width: 19px;
    height: 20px;
  }
  .raised {
    box-shadow: inset 0 0 4px #ddd;
  }
  .filter {
    flex: 0 0 37px;
    display: flex;
    border-bottom: 2px solid #ddd;
  }
  .filter label {
    position: relative;
    display: flex;
    width: 183px;
    border-right: 1px solid #ddd;
  }
  .filter select {
    appearance: none;
    width: 100%;
    border: 0;
    padding: 0 0 0 4px;
    background: none;
    font: inherit;
    font-size: 16px;
    color: #1b91d3;
  }
  .filter svg {
    position: absolute;
    right: 13px;
    top: 14px;
    width: 12px;
    height: 8px;
    fill: none;
    stroke: #1b91d3;
    stroke-width: 2;
  }

  .grid-wrap {
    flex: 1;
    min-height: 0;
    display: grid;
    grid-template-columns: 1fr 12px;
    grid-template-rows: 1fr 14px;
  }
  .grid {
    min-height: 0;
    overflow: hidden;
  }
  table {
    width: 100%;
    table-layout: fixed;
    border-collapse: separate;
    border-spacing: 0;
  }
  th, td {
    box-sizing: border-box;
    padding: 0;
    border-right: 1px solid #ddd;
    border-bottom: 1px solid #ddd;
    font-weight: 400;
  }
  th {
    height: 38px;
    padding-top: 2px;
    font-size: 14px;
    background: linear-gradient(#fff 16px, #f3f4f6 16px, #eff0f2);
  }
  th.mark {
    width: 8px;
    background: #f0f0f0;
  }
  th:last-child, td:last-child {
    width: 5px;
    border-right: 0;
  }
  td {
    height: 26px;
  }
  tr:nth-child(4n) td {
    height: 27px;
  }
  .name {
    overflow: hidden;
  }
  .node {
    display: flex;
    align-items: center;
    gap: 3px;
    height: 25px;
    padding-left: 2px;
    white-space: pre;
  }
  .level-1 {
    padding-left: 33px;
  }
  .level-2 {
    padding-left: 64px;
  }
  .node span {
    line-height: 25px;
  }
  .node .ico {
    flex: none;
    width: 19px;
    height: 20px;
  }
  .link {
    color: #0000ff;
  }
  .toggle {
    flex: none;
    width: 13px;
    height: 13px;
    border: 1px solid #333;
    border-radius: 2px;
    background: linear-gradient(#222, #222) center / 7px 1px no-repeat, linear-gradient(#222, #222) center / 1px 7px no-repeat;
  }
  .toggle.open {
    background: linear-gradient(#222, #222) center / 7px 1px no-repeat;
  }
  .num {
    overflow: hidden;
    padding-left: 2px;
  }

  .vscroll, .hscroll {
    display: flex;
    align-items: center;
  }
  .vscroll {
    flex-direction: column;
    padding-top: 40px;
  }
  .vscroll b {
    width: 8px;
    height: 360px;
    margin-top: 4px;
    background: #1b91d3;
  }
  .hscroll {
    padding-left: 10px;
  }
  .hscroll b {
    width: 355px;
    height: 8px;
    margin-left: 4px;
    background: #1b91d3;
  }
  i {
    border: 6px solid transparent;
  }
  .up {
    border-top: 0;
    border-bottom: 11px solid #0f94d8;
  }
  .down {
    margin-top: auto;
    margin-bottom: 2px;
    border-bottom: 0;
    border-top: 11px solid #0f94d8;
  }
  .left {
    border-left: 0;
    border-right: 11px solid #0f94d8;
  }
  .right {
    margin-left: auto;
    margin-right: 2px;
    border-right: 0;
    border-left: 11px solid #0f94d8;
  }

  .viewer {
    flex: 1;
    min-width: 0;
    display: flex;
    flex-direction: column;
    border-left: 5px solid #b4d6f2;
    border-bottom: 5px solid #b4d6f2;
  }
  .seven {
    padding-left: 1px;
  }
  .seven button {
    flex-basis: 39px;
  }
  .seven button:nth-child(3n) {
    flex-basis: 38px;
  }
  .seven svg {
    width: 28px;
    height: 28px;
  }
  .canvas {
    position: relative;
    flex: 1;
    min-height: 0;
    overflow: hidden;
    border: 1px solid #dde3ea;
    border-right: 0;
    background: #212830;
    color: #fff;
    font-family: 'Open Sans', sans-serif;
    font-size: 15px;
  }
  .scene {
    position: absolute;
    width: 100%;
    height: 100%;
  }
  .round-row, .round-col {
    position: absolute;
    left: 6px;
    top: 6px;
    display: flex;
    gap: 6px;
  }
  .round-col {
    top: 56px;
    flex-direction: column;
  }
  .round-row button, .round-col button {
    width: 38px;
    height: 38px;
    border-radius: 50%;
    background: #b2b6cb;
  }
  .round-row .first {
    margin-right: 6px;
  }
  .round-row .on, .round-col .on {
    background: #8ccef0;
  }
  .round-row svg, .round-col svg {
    width: 38px;
    height: 38px;
    fill: none;
    stroke: #161b20;
    stroke-width: 5;
  }
  .stats {
    position: absolute;
    left: 6px;
    bottom: -1px;
    line-height: 20px;
  }
  .langs {
    position: absolute;
    right: 6px;
    bottom: 8px;
    display: flex;
    gap: 5px;
  }
  .cur {
    font-weight: 700;
  }

  footer {
    flex: 0 0 20px;
    display: flex;
    line-height: 20px;
    background: #4d5973;
    color: #fff;
  }
  footer span {
    display: flex;
    align-items: center;
    padding: 0 7px;
    border-right: 1px solid #737782;
  }
  footer .ver {
    padding: 0 6px 0 4px;
  }
  footer a {
    color: #fff;
  }
  footer svg {
    width: 18px;
    height: 18px;
    margin-left: 7px;
  }
</style>
